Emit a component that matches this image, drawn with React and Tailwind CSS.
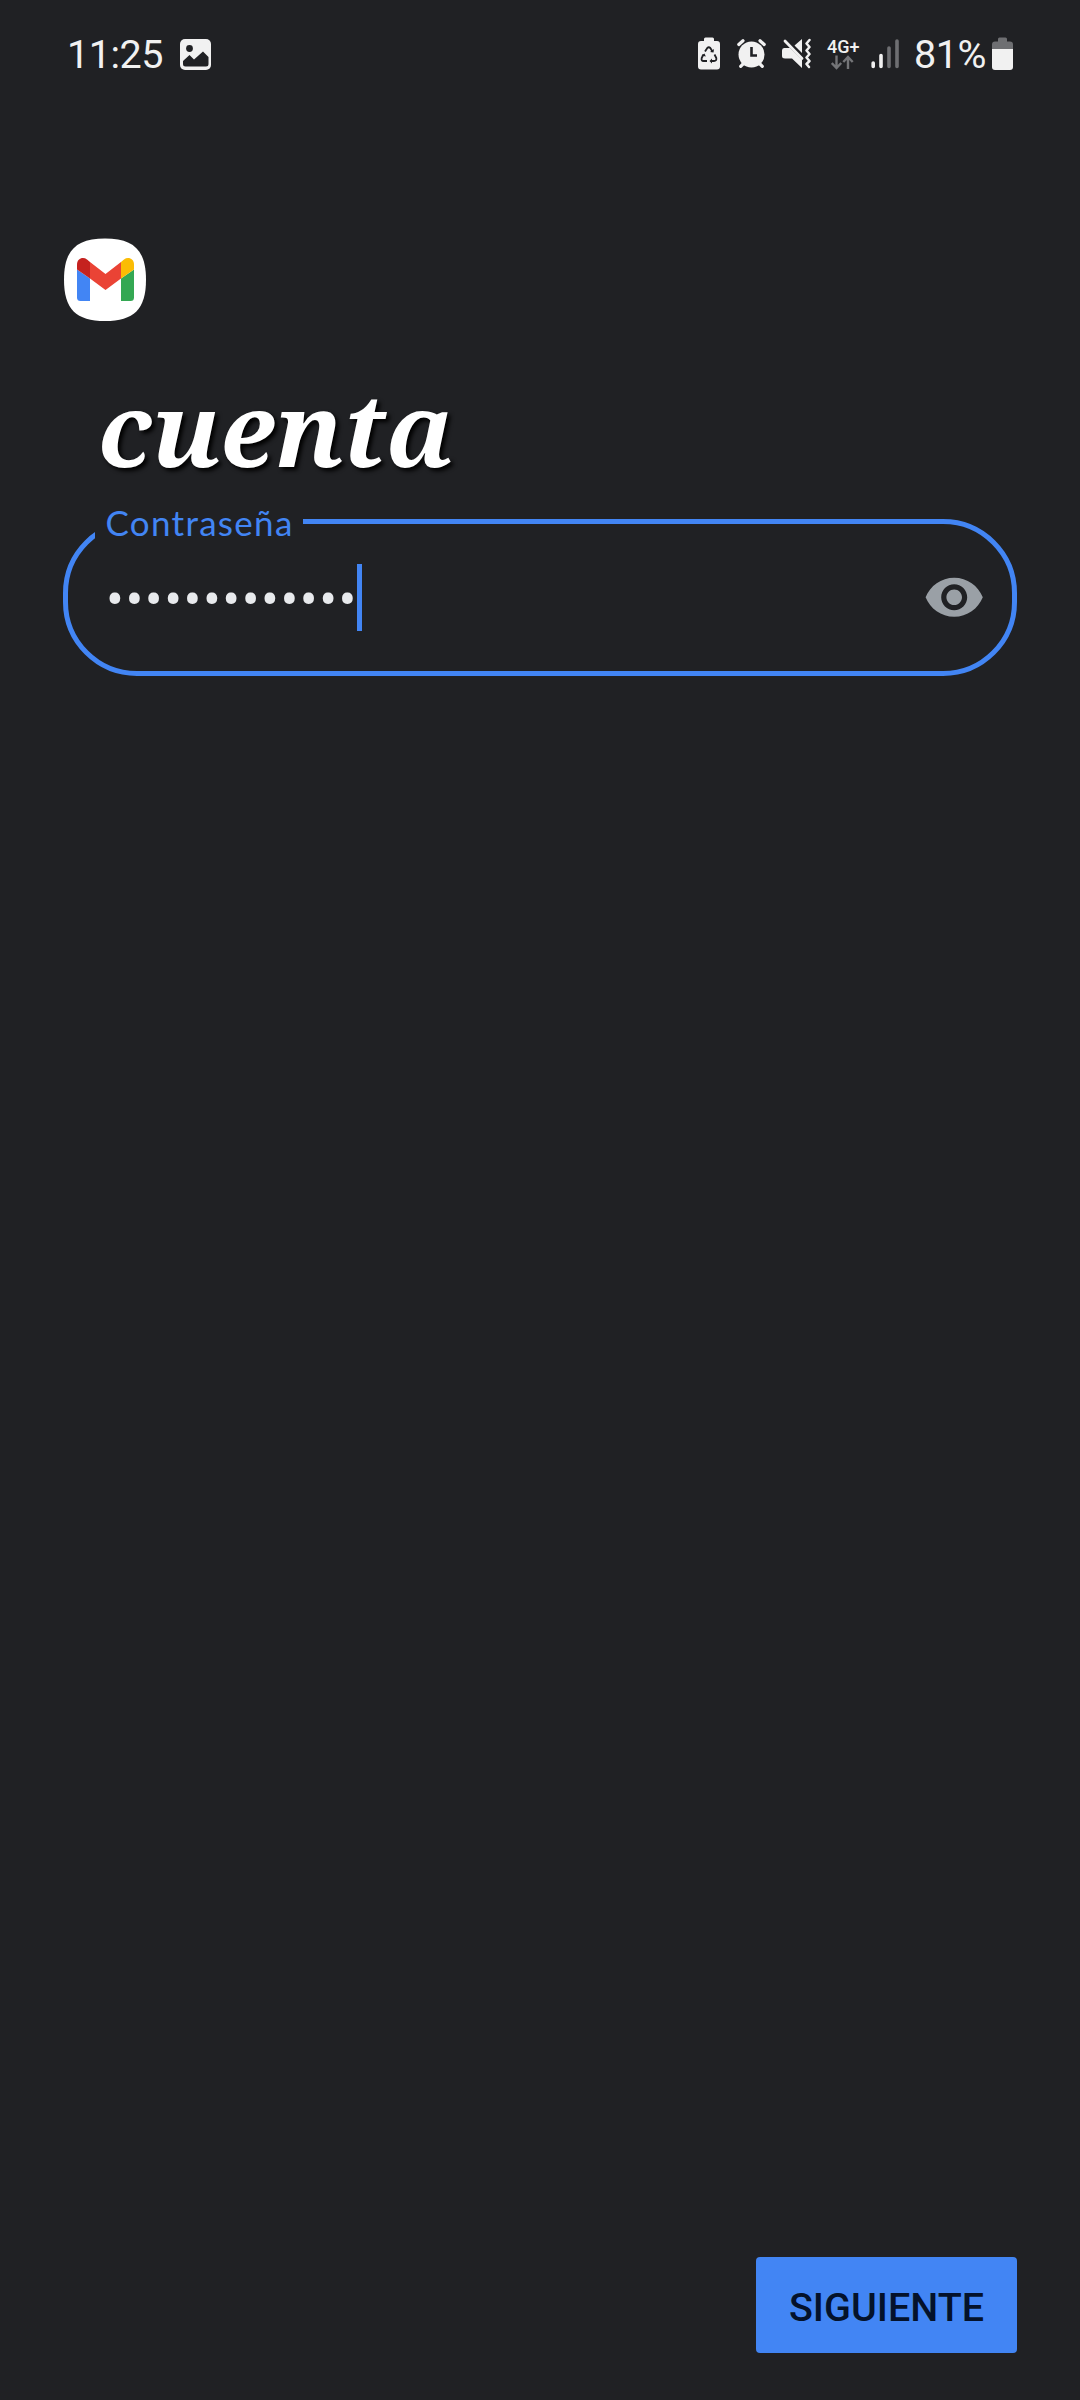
const StatusBar = () => (
  <header className="flex h-[36px] items-start pl-[67px] text-[#f1f1f1]">
    <span className="w-[112px] pt-[1px] text-[39.5px] leading-[36px] tracking-[-0.5px] whitespace-nowrap">11:25</span>
    <svg className="ml-[1px]" width="31" height="36" viewBox="0 0 31 36">
      <rect x="0" y="3" width="31" height="31" rx="5" fill="#f1f1f1" />
      <circle cx="9.5" cy="12.5" r="3.4" fill="#202124" />
      <path d="M3 25 L9.5 19 L14 23.500 L23 15.500 L28.500 21 V28 Q28.500 30.500 26 30.500 H5.500 Q3 30.500 3 28 Z" fill="#202124" />
    </svg>

    <div className="ml-auto flex">
      {/* battery protection */}
      <svg width="22" height="36" viewBox="0 0 22 36">
        <path d="M6 5 V3 Q6 1.500 7.500 1.500 H14.500 Q16 1.500 16 3 V5 H19 Q22 5 22 8 V30.500 Q22 33.500 19 33.500 H3 Q0 33.500 0 30.500 V8 Q0 5 3 5 Z" fill="#f1f1f1" />
        <g fill="none" stroke="#202124" strokeWidth="1.8" strokeLinejoin="round">
          <path d="M7 15.500 L9.300 12 Q10.800 10.500 12.300 12 L14.500 15.500" />
          <path d="M16.500 18.500 L18.300 22 Q18.800 25 16 25 H13" />
          <path d="M9 25 H5.500 Q3 25 3.700 22 L5.500 18.500" />
        </g>
        <path d="M12 16 L15.500 16.500 L16 13 Z M14 22.500 L11.500 25 L14 27.500 Z M3.500 19.500 L6.500 17.500 L7.800 20.500 Z" fill="#202124" />
      </svg>
      {/* alarm */}
      <svg className="ml-[17px]" width="29" height="36" viewBox="0 0 29 36">
        <circle cx="14.500" cy="18.500" r="13" fill="#f1f1f1" />
        <g stroke="#f1f1f1" strokeWidth="3.200" strokeLinecap="round">
          <path d="M1.800 8.500 L6 4.700 M27.200 8.500 L23 4.700 M3.700 30.300 L7 27 M25.300 30.300 L22 27" />
        </g>
        <path d="M14.500 11 V19.500 H20" fill="none" stroke="#202124" strokeWidth="2.600" />
      </svg>
      {/* muted, vibrating */}
      <svg className="ml-[16px]" width="29" height="36" viewBox="0 0 29 36">
        <path d="M2 12 H8 L20 24 V32 L10 22.500 H3 Q0 22.500 0 20 V14.500 Q0 12 2 12 Z M12.500 9.500 L20 3 V17 Z" fill="#f1f1f1" />
        <path d="M3 5 L20 22.500" stroke="#f1f1f1" strokeWidth="2.800" strokeLinecap="round" />
        <path d="M27.500 4 L24.500 7.500 L27.500 11 L24.500 14.500 L27.500 18 L24.500 21.500 L27.500 25 L24.500 28 L27 31" fill="none" stroke="#f1f1f1" strokeWidth="2.500" strokeLinecap="round" strokeLinejoin="round" />
      </svg>
      <div className="ml-[16px] flex w-[32px] flex-col">
        <span className="h-[18px] pt-[2px] text-[18px] leading-[18px] font-medium">4G+</span>
        <svg className="ml-[4px]" width="23" height="16" viewBox="0 0 23 16" fill="none" stroke="#747578" strokeWidth="2.400">
          <path d="M5.500 1.500 V14 M0.800 9 L5.500 14 L10.200 9 M17 15 V3 M12.300 8 L17 3 L21.700 8" />
        </svg>
      </div>
      {/* signal */}
      <svg className="ml-[12px]" width="29" height="36" viewBox="0 0 29 36" strokeWidth="3.600" strokeLinecap="round">
        <path d="M2.200 27 V30.500 M10 19.500 V30.500" stroke="#f1f1f1" />
        <path d="M18 12 V30.500 M26 5 V30.500" stroke="#6e6f72" />
      </svg>
      <span className="ml-[14px] w-[78px] pt-[1px] text-[39.5px] leading-[36px] tracking-[-0.4px] whitespace-nowrap">81%</span>
      <svg className="mr-[67px]" width="21" height="36" viewBox="0 0 21 36">
        <path d="M6 5.500 V3 Q6 1.500 7.500 1.500 H13.500 Q15 1.500 15 3 V5.500 H18 Q21 5.500 21 8.500 V13 H0 V8.500 Q0 5.500 3 5.500 Z" fill="#6e6f72" />
        <path d="M0 13 H21 V31 Q21 34 18 34 H3 Q0 34 0 31 Z" fill="#f1f1f1" />
      </svg>
    </div>
  </header>
);

const GmailIcon = () => (
  <svg className="ml-[1px]" width="82" height="83" viewBox="0 0 82 83">
    <path d="M41 0.500 C70 0.500 82 12.500 82 41.700 C82 71 70 83 41 83 C12 83 0 71 0 41.700 C0 12.500 12 0.500 41 0.500 Z" fill="#fff" />
    <path d="M13 31.500 L26 40.500 V63 H16.500 Q13 63 13 59.500 Z" fill="#4285f4" />
    <path d="M57 40.500 L70 31.500 V59.500 Q70 63 66.500 63 H57 Z" fill="#34a853" />
    <path d="M26 24 L41.500 36 L57 24 V40.500 L41.500 52 L26 40.500 Z" fill="#ea4335" />
    <path d="M13 31.500 V26.500 C13 20.500 19 18.500 23 21.500 L26 24 V40.500 Z" fill="#c5221f" />
    <path d="M57 24 L60 21.500 C64 18.500 70 20.500 70 26.500 V31.500 L57 40.500 Z" fill="#fbbc04" />
  </svg>
);

const PasswordField = () => (
  <div className="relative flex h-[157px] w-[954px] items-center rounded-[74px] border-[5px] border-[#4285f4] pl-[37px] pr-[26.5px]">
    <label className="absolute -top-[22px] left-[27px] h-[43px] w-[208px] bg-[#202124] pl-[10.500px] font-['Lato','Liberation_Sans',sans-serif] text-[35px] leading-[41px] tracking-[1.300px] whitespace-nowrap text-[#4285f4]">
      Contraseña
    </label>
    <span className="w-[252px] pt-[5px] pl-[1px] text-[53px] leading-[60px] tracking-[1.500px] whitespace-nowrap text-[#e8eaed]">•••••••••••••</span>
    <span className="h-[67px] w-[5px] bg-[#4285f4]" />
    <svg className="ml-auto" width="62.400" height="62.400" viewBox="0 0 24 24" fill="#9aa0a6">
      <path d="M12 4.500C7 4.500 2.730 7.610 1 12c1.730 4.390 6 7.500 11 7.500s9.270-3.110 11-7.500c-1.730-4.390-6-7.500-11-7.500zM12 17c-2.760 0-5-2.240-5-5s2.240-5 5-5 5 2.240 5 5-2.240 5-5 5zm0-8c-1.660 0-3 1.340-3 3s1.340 3 3 3 3-1.340 3-3-1.340-3-3-3z" />
    </svg>
  </div>
);

export default function App() {
  return (
    <div className="flex h-[2400px] w-[1080px] flex-col overflow-hidden bg-[#202124] pt-[36px] font-['Roboto',sans-serif]">
      <StatusBar />
      <main className="flex flex-1 flex-col items-start pt-[166px] pb-[47px] pl-[63px] pr-[63px]">
        <GmailIcon />
        <h1 className="mt-[37px] ml-[35px] h-[161px] font-['Noto_Serif','DejaVu_Serif',serif] text-[102px] leading-[140px] font-bold italic whitespace-nowrap text-white [text-shadow:3px_3px_4px_#000]">
          cuenta
        </h1>
        <PasswordField />
        <button className="mt-auto h-[96px] w-[261px] self-end rounded-[4px] bg-[#4285f4] pt-[5px] text-[39.500px] font-medium text-[#04122b]">
          SIGUIENTE
        </button>
      </main>
    </div>
  );
}
